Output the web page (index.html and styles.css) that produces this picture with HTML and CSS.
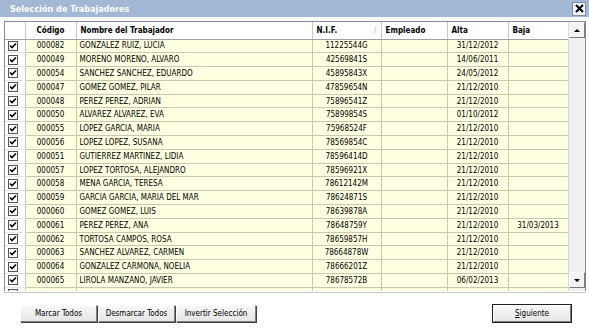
FILE: index.html
```html
<!DOCTYPE html>
<html lang="es">
<head>
    <meta charset="UTF-8">
    <title>Selección de Trabajadores</title>
    <link rel="stylesheet" href="styles.css">
</head>
<body>
    <div class="window">
        <div class="titlebar">
            <span class="title">Selección de Trabajadores</span>
            <span class="close">
                <svg width="9" height="9" viewBox="0 0 9 9"><path d="M1 1L8 8M8 1L1 8" stroke="#000" stroke-width="2"/></svg>
            </span>
        </div>

        <div class="grid">
            <div class="grid-body">
                <table>
                    <colgroup>
                        <col class="c-chk"><col class="c-cod"><col class="c-nom"><col class="c-nif">
                        <col class="c-emp"><col class="c-alta"><col class="c-baja">
                    </colgroup>
                    <thead>
                        <tr>
                            <th></th>
                            <th>Código</th>
                            <th class="left">Nombre del Trabajador</th>
                            <th class="left">N.I.F. <span class="sort">/</span></th>
                            <th class="left">Empleado</th>
                            <th class="left">Alta</th>
                            <th class="left">Baja</th>
                        </tr>
                    </thead>
                    <tbody id="rows"></tbody>
                </table>
            </div>
            <div class="vscroll">
                <div class="arrow up"><span class="tri-up"></span></div>
                <div class="track"></div>
                <div class="arrow down"><span class="tri-down"></span></div>
            </div>
        </div>

        <div class="footer">
            <div class="btn-group">
                <button class="btn">Marcar Todos</button>
                <button class="btn">Desmarcar Todos</button>
                <button class="btn">Invertir Selección</button>
            </div>
            <button class="btn default"><u>S</u>iguiente</button>
        </div>
    </div>

    <script>
        // Datos de trabajadores
        const trabajadores = [
            ['000082', 'GONZALEZ RUIZ, LUCIA', '11225544G', '31/12/2012', ''],
            ['000049', 'MORENO MORENO, ALVARO', '42569841S', '14/06/2011', ''],
            ['000054', 'SANCHEZ SANCHEZ, EDUARDO', '45895843X', '24/05/2012', ''],
            ['000047', 'GOMEZ GOMEZ, PILAR', '47859654N', '21/12/2010', ''],
            ['000048', 'PEREZ PEREZ, ADRIAN', '75896541Z', '21/12/2010', ''],
            ['000050', 'ALVAREZ ALVAREZ, EVA', '75899854S', '01/10/2012', ''],
            ['000055', 'LOPEZ GARCIA, MARIA', '75968524F', '21/12/2010', ''],
            ['000056', 'LOPEZ LOPEZ, SUSANA', '78569854C', '21/12/2010', ''],
            ['000051', 'GUTIERREZ MARTINEZ, LIDIA', '78596414D', '21/12/2010', ''],
            ['000057', 'LOPEZ TORTOSA, ALEJANDRO', '78596921X', '21/12/2010', ''],
            ['000058', 'MENA GARCIA, TERESA', '78612142M', '21/12/2010', ''],
            ['000059', 'GARCIA GARCIA, MARIA DEL MAR', '78624871S', '21/12/2010', ''],
            ['000060', 'GOMEZ GOMEZ, LUIS', '78639878A', '21/12/2010', ''],
            ['000061', 'PEREZ PEREZ, ANA', '78648759Y', '21/12/2010', '31/03/2013'],
            ['000062', 'TORTOSA CAMPOS, ROSA', '78659857H', '21/12/2010', ''],
            ['000063', 'SANCHEZ ALVAREZ, CARMEN', '78664878W', '21/12/2010', ''],
            ['000064', 'GONZALEZ CARMONA, NOELIA', '78666201Z', '21/12/2010', ''],
            ['000065', 'LIROLA MANZANO, JAVIER', '78678572B', '06/02/2013', ''],
            ['', '', '', '', '']
        ];

        const check = '<span class="chk"><svg width="8" height="8" viewBox="0 0 8 8"><path d="M1 3.5L3 5.5L7 1.5" stroke="#000" stroke-width="1.6" fill="none"/></svg></span>';
        const tbody = document.getElementById('rows');

        trabajadores.forEach(t => {
            const tr = document.createElement('tr');
            tr.innerHTML = `
                <td class="chk-cell">${check}</td>
                <td class="center">${t[0]}</td>
                <td>${t[1]}</td>
                <td class="center">${t[2]}</td>
                <td></td>
                <td class="center">${t[3]}</td>
                <td class="center">${t[4]}</td>
            `;
            tbody.appendChild(tr);
        });
    </script>
</body>
</html>
```

FILE: styles.css
```css
* {
    box-sizing: border-box;
}
body {
    margin: 0;
    background: #ffffff;
    font-family: Tahoma, "DejaVu Sans Condensed", "DejaVu Sans", sans-serif;
    font-stretch: condensed;
    font-size: 8px;
    color: #000;
}
.window {
    width: 589px;
    height: 331px;
    display: flex;
    flex-direction: column;
}
.titlebar {
    height: 17px;
    background: #a3b8d4;
    display: flex;
    align-items: center;
    justify-content: space-between;
    padding: 0 3px 0 10px;
}
.title {
    color: #fff;
    font-weight: bold;
    font-size: 9px;
}
.close {
    width: 14px;
    height: 14px;
    background: #f4f4f4;
    border: 1px solid #7f8ea3;
    display: flex;
    align-items: center;
    justify-content: center;
}
.grid {
    margin: 4px 3px 0 4px;
    height: 270px;
    border: 1px solid #8a8a8a;
    border-bottom: none;
    display: flex;
    overflow: hidden;
}
.grid-body {
    width: 563px;
    overflow: hidden;
}
table {
    border-collapse: collapse;
    table-layout: fixed;
    width: 563px;
}
.c-chk { width: 20px; }
.c-cod { width: 51px; }
.c-nom { width: 236px; }
.c-nif { width: 69px; }
.c-emp { width: 66px; }
.c-alta { width: 61px; }
.c-baja { width: 60px; }
th {
    height: 17px;
    background: #ffffff;
    font-weight: bold;
    text-align: center;
    border-right: 1px solid #c8c8c8;
    border-bottom: 1px solid #a0a0a0;
    padding: 0 4px;
    white-space: nowrap;
}
th.left {
    text-align: left;
}
.sort {
    float: right;
    color: #b0b0b0;
    font-weight: normal;
}
td {
    height: 13.8px;
    padding: 0 3px;
    background: #ffffe1;
    border-right: 1px solid #c9c9b0;
    border-bottom: 1px solid #c9c9b0;
    white-space: nowrap;
    overflow: hidden;
}
td.center {
    text-align: center;
}
td.chk-cell {
    background: #ffffff;
    padding: 0 0 0 3px;
    border-right: 1px solid #c8c8c8;
    border-bottom: 1px solid #e4e4e4;
}
.chk {
    display: flex;
    width: 10px;
    height: 10px;
    border: 1px solid #555;
    background: #fff;
    align-items: center;
    justify-content: center;
}
.vscroll {
    width: 17px;
    display: flex;
    flex-direction: column;
    background: #f0f0f0;
    border-left: 1px solid #d8d8d8;
}
.track {
    flex: 1;
}
.arrow {
    height: 16px;
    background: #f4f4f4;
    border: 1px solid #fff;
    border-right-color: #7a7a7a;
    border-bottom-color: #7a7a7a;
    display: flex;
    align-items: center;
    justify-content: center;
}
.arrow.down {
    margin-bottom: 3px;
}
.tri-up {
    border-left: 3px solid transparent;
    border-right: 3px solid transparent;
    border-bottom: 3px solid #000;
}
.tri-down {
    border-left: 3px solid transparent;
    border-right: 3px solid transparent;
    border-top: 3px solid #000;
}
.footer {
    margin-top: 1px;
    border-top: 1px solid #c8c8c8;
    margin-left: 4px;
    margin-right: 3px;
    display: flex;
    justify-content: space-between;
    align-items: flex-start;
    padding: 12px 15px 0 16px;
}
.btn-group {
    display: flex;
    gap: 1px;
}
.btn {
    font-family: inherit;
    font-stretch: condensed;
    font-size: 8px;
    height: 17px;
    padding: 0;
    background: linear-gradient(#f7f7f7, #e6e6e6);
    border: 1px solid #fff;
    border-right-color: #808080;
    border-bottom-color: #808080;
    box-shadow: 1px 1px 0 #404040;
    color: #000;
}
.btn-group .btn:nth-child(1) { width: 77px; }
.btn-group .btn:nth-child(2) { width: 77px; }
.btn-group .btn:nth-child(3) { width: 80px; }
.btn.default {
    width: 78px;
    outline: 1px solid #202020;
    margin-right: 0;
}
u {
    text-decoration: underline;
}
```
